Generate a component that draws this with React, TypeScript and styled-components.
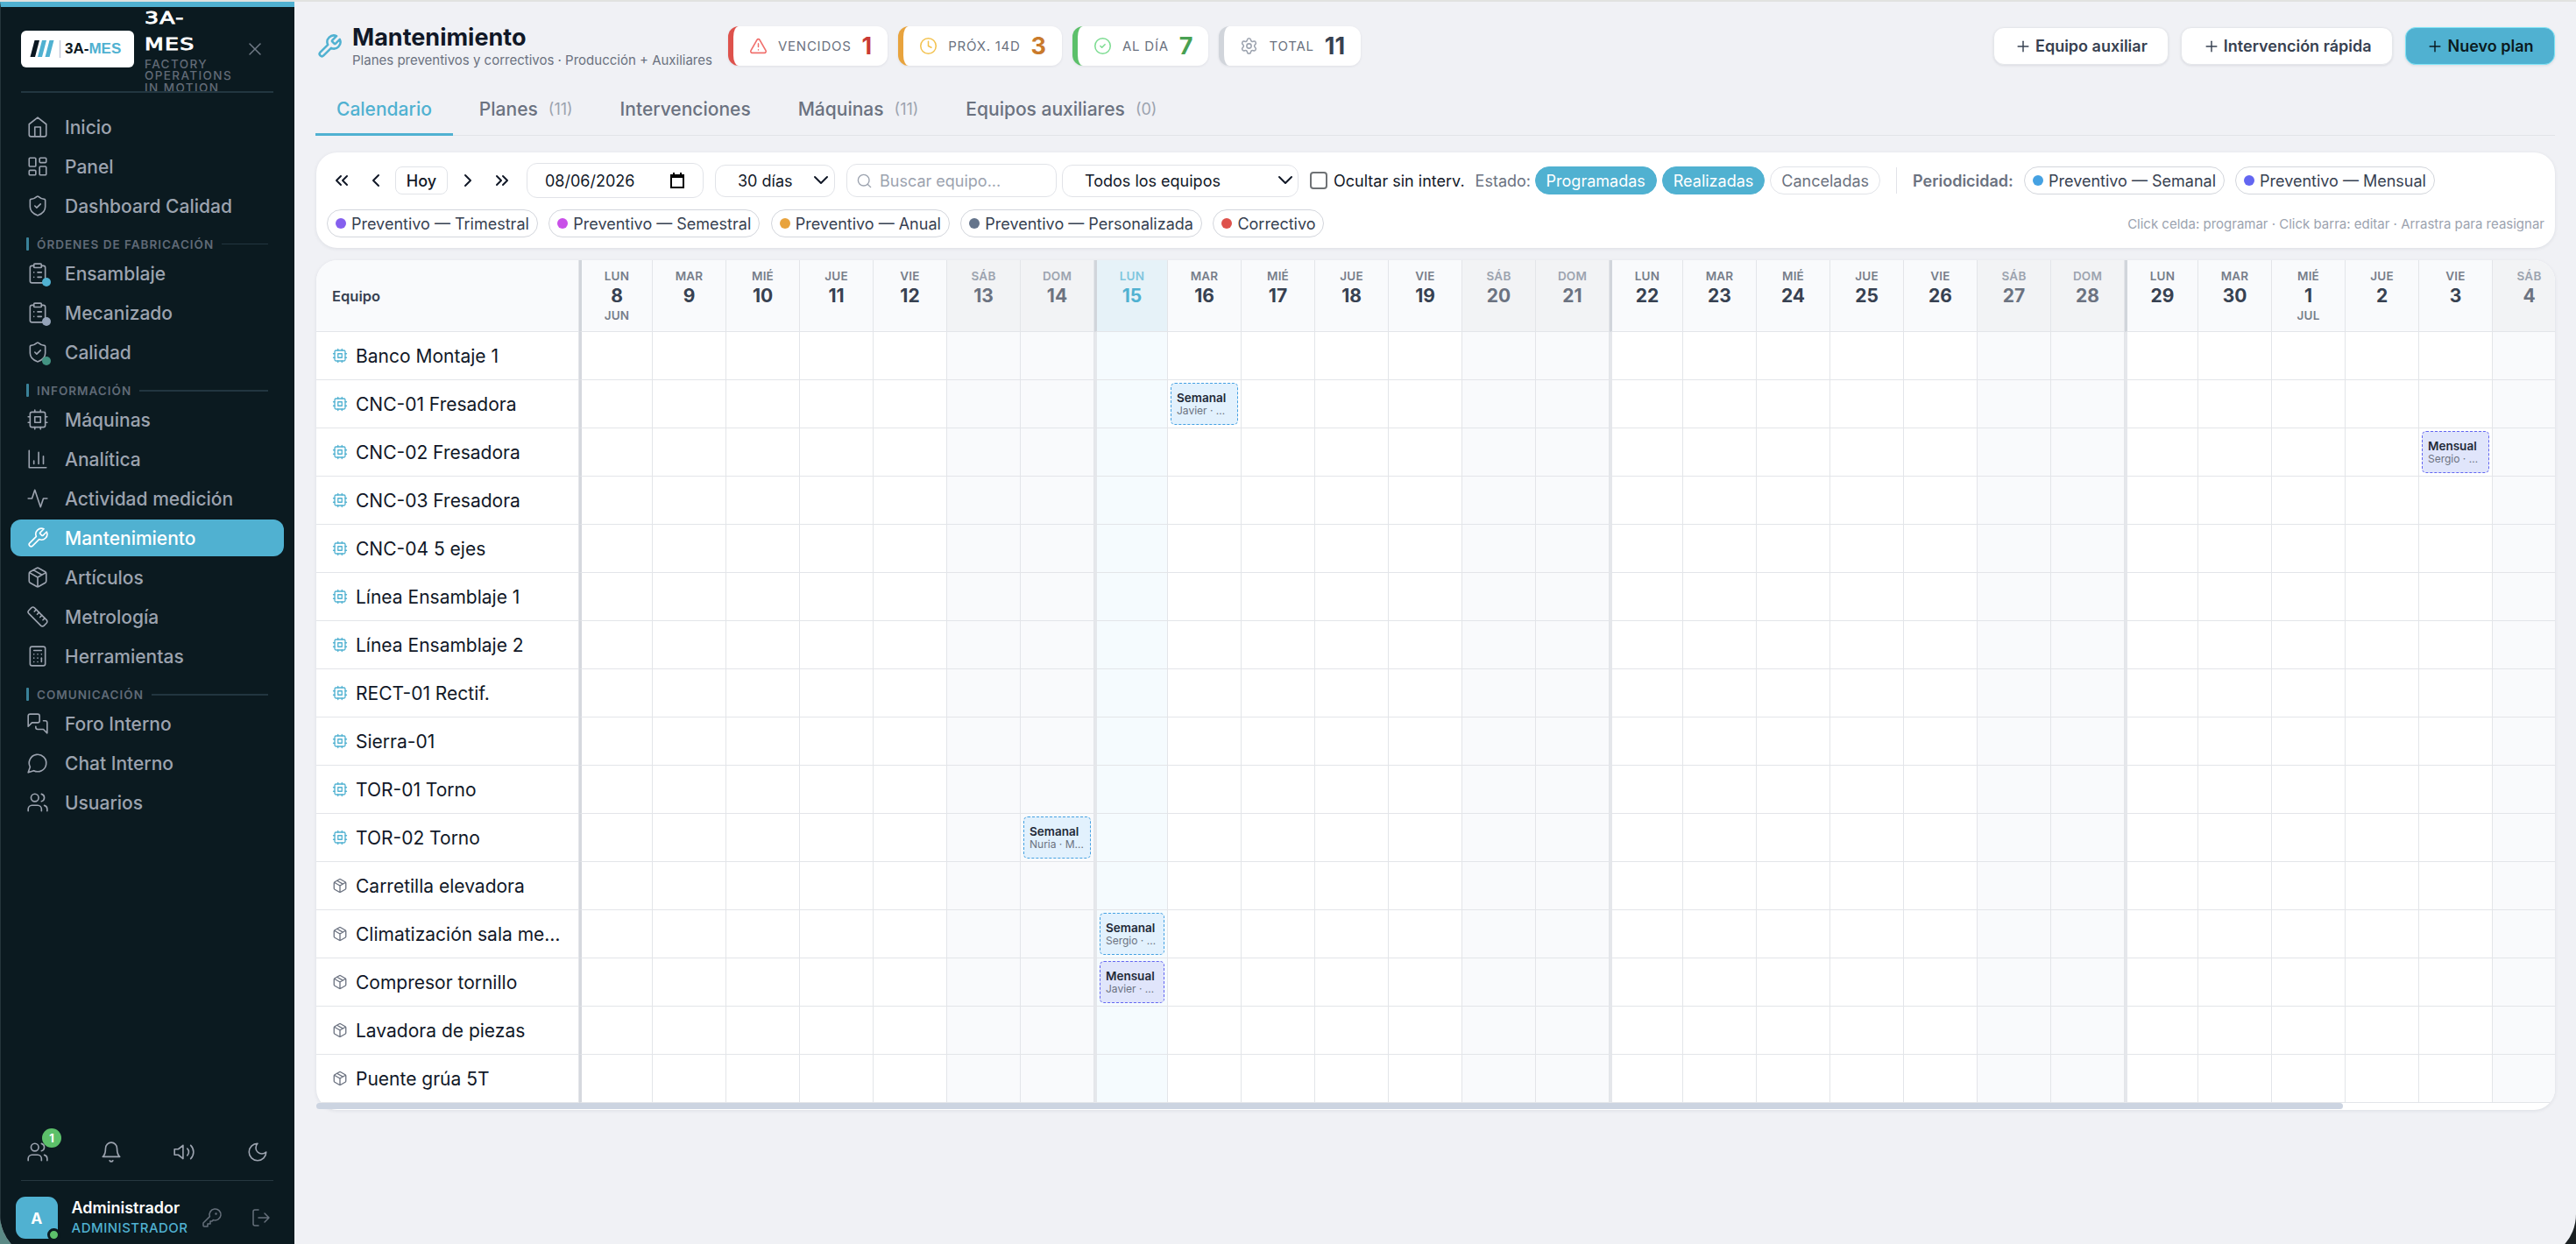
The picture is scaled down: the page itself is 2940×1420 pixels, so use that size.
import React from "react";
import styled, { createGlobalStyle, css } from "styled-components";
import {
  ShieldCheck, LayoutDashboard, ClipboardList, Ruler, Calculator, Users, TriangleAlert, Clock,
  CircleCheck, Settings, Plus, ChevronsLeft, ChevronLeft, ChevronRight, ChevronsRight, Search, X,
} from "lucide-react";

const teal = "#50b1d1";
const ink = "#0b1a20";
const line = "#e3e5e9";

const GlobalStyle = createGlobalStyle`
  *, *::before, *::after { box-sizing: border-box; }
  body { margin: 0; background: #0b1217; font-family: Inter, "Liberation Sans", sans-serif; }
  svg { display: block; flex: none; }
`;

/* ---------- icons ---------- */
type IconProps = { size?: number; strokeWidth?: number };
const stroked = (d: string, extra?: React.ReactNode) =>
  function Stroked({ size = 26, strokeWidth = 1.5 }: IconProps) {
    return (
      <svg width={size} height={size} viewBox="0 0 24 24" fill="none" stroke="currentColor"
        strokeWidth={strokeWidth} strokeLinecap="round" strokeLinejoin="round">
        <path d={d} />
        {extra}
      </svg>
    );
  };
const HomeIcon = stroked("m3 9 9-7 9 7v11a2 2 0 0 1-2 2H5a2 2 0 0 1-2-2z M9 22V12h6v10");
const Chip = stroked("M15 2v2M15 20v2M2 15h2M2 9h2M20 15h2M20 9h2M9 2v2M9 20v2",
  <><rect x="4" y="4" width="16" height="16" rx="2" /><rect x="9" y="9" width="6" height="6" /></>);
const Bars = stroked("M3 3v18h18M18 17V9M13 17V5M8 17v-3");
const Pulse = stroked("M22 12h-4l-3 9L9 3l-3 9H2");
const WrenchIcon = stroked("M14.7 6.3a1 1 0 0 0 0 1.4l1.6 1.6a1 1 0 0 0 1.4 0l3.77-3.77a6 6 0 0 1-7.94 7.94l-6.91 6.91a2.12 2.12 0 0 1-3-3l6.91-6.91a6 6 0 0 1 7.94-7.94l-3.76 3.76z");
const Box = stroked("m7.5 4.27 9 5.15M21 8a2 2 0 0 0-1-1.73l-7-4a2 2 0 0 0-2 0l-7 4A2 2 0 0 0 3 8v8a2 2 0 0 0 1 1.73l7 4a2 2 0 0 0 2 0l7-4A2 2 0 0 0 21 16ZM3.3 7l8.7 5 8.7-5M12 22V12");
const Forum = stroked("M14 9a2 2 0 0 1-2 2H6l-4 4V4c0-1.1.9-2 2-2h8a2 2 0 0 1 2 2zM18 9h2a2 2 0 0 1 2 2v11l-4-4h-6a2 2 0 0 1-2-2v-1");
const Chat = stroked("M7.9 20A9 9 0 1 0 4 16.1L2 22Z");
const BellIcon = stroked("M6 8a6 6 0 0 1 12 0c0 7 3 9 3 9H3s3-2 3-9M10.3 21a1.94 1.94 0 0 0 3.4 0");
const Volume = stroked("M11 5 6 9H2v6h4l5 4zM15.54 8.46a5 5 0 0 1 0 7.07M19.07 4.93a10 10 0 0 1 0 14.14");
const MoonIcon = stroked("M12 3a6 6 0 0 0 9 9 9 9 0 1 1-9-9Z");
const KeyIcon = stroked("M2 18v3c0 .6.4 1 1 1h4v-3h3v-3h2l1.4-1.4a6.5 6.5 0 1 0-4-4Z",
  <circle cx="16.5" cy="7.5" r=".5" fill="currentColor" />);
const Exit = stroked("M9 21H5a2 2 0 0 1-2-2V5a2 2 0 0 1 2-2h4M16 17l5-5-5-5M21 12H9");

/* ---------- frame ---------- */
const Desktop = styled.div`
  width: 2940px; height: 1420px; overflow: hidden;
  background: linear-gradient(90deg, #5b8a86 0 50%, #1a2022 50%);
`;
const Win = styled.div`
  height: 1438px; display: flex; overflow: hidden;
  border-top: 2px solid #e1e2e0; border-radius: 0 0 52px 52px; background: #f0f1f5;
`;

/* ---------- sidebar ---------- */
const Sidebar = styled.aside`
  width: 336px; flex: none; display: flex; flex-direction: column; color: #9ca3af; padding-bottom: 18px;
  background: ${ink}; border-top: 6px solid ${teal}; border-left: 1px solid #25353b;
`;
const Brand = styled.div`
  height: 98px; flex: none; margin: 0 24px 0 23px; display: flex; align-items: center; overflow: hidden;
  border-bottom: 2px solid #223640;
`;
const Logo = styled.div`
  width: 129px; height: 42px; border-radius: 6px; background: #fff; flex: none;
  display: flex; align-items: center; padding-left: 10px; gap: 4px;
  font: 700 17px "Liberation Sans", Arial, sans-serif; color: #0b1720;
  b { color: ${teal}; }
`;
const BrandText = styled.div`width: 114px; margin-left: 12px;`;
const BrandName = styled.div`
  width: 58px; font: 400 20px/30px "DejaVu Sans", sans-serif; letter-spacing: 1px; color: #fff;
  -webkit-text-stroke: .9px #fff; transform: scaleX(1.26); transform-origin: left;
`;
const BrandTag = styled.div`
  font-size: 13.5px; line-height: 13.3px; font-weight: 500; letter-spacing: 1.4px; color: #626b77; padding-top: 2px;
`;
const Close = styled.div`color: #717a86;`;
const Nav = styled.nav`display: flex; flex-direction: column; gap: 3px; padding: 18px 12px 0 11px; flex: 1;`;
const NavItem = styled.div<{ $active?: boolean }>`
  height: 42px; border-radius: 12px; padding-left: 18px; display: flex; align-items: center; gap: 18px;
  font-size: 21px; font-weight: 500; white-space: nowrap;
  ${(p) => p.$active && css`background: ${teal}; color: #fff;`}
`;
const IconWrap = styled.span`position: relative; display: block;`;
const Dot = styled.i<{ $c: string }>`
  position: absolute; right: -2px; bottom: -2px; width: 10px; height: 10px; border-radius: 50%; background: ${(p) => p.$c};
`;
const Section = styled.div<{ $rule: number }>`
  height: 29px; padding: 10px 18px 0 18px; display: flex; align-items: center; gap: 9px;
  font-size: 13.5px; font-weight: 600; letter-spacing: 1px; color: #606a77; white-space: nowrap;
  &::before { content: ""; width: 3px; height: 15px; background: #3a8299; border-radius: 1px; }
  &::after { content: ""; flex: 1; height: ${(p) => p.$rule}px; background: #223640; }
`;
const Tray = styled.div`
  height: 64px; flex: none; margin: 0 24px 0 23px; padding: 0 5px 2px 6px; border-bottom: 1px solid #263840;
  display: flex; align-items: center; justify-content: space-between;
`;
const Count = styled.span`
  position: absolute; left: 18px; top: -14px; width: 22px; height: 22px; border-radius: 50%; background: #5cc06a;
  color: #fff; font-size: 13px; font-weight: 700; line-height: 22px; text-align: center;
`;
const Profile = styled.div`height: 72px; flex: none; padding: 12px 26px 0 17px; display: flex; align-items: center;`;
const Avatar = styled.div`
  position: relative; width: 48px; height: 48px; border-radius: 11px; background: ${teal}; color: #fff;
  display: flex; align-items: center; justify-content: center; font-size: 17.5px; font-weight: 700;
  &::after { content: ""; position: absolute; right: -3px; bottom: -3px; width: 15px; height: 15px; border-radius: 50%;
    background: #5cc06a; border: 3px solid ${ink}; }
`;
const Who = styled.div`
  width: 150px; margin-left: 16px; font-size: 18px; line-height: 23px; font-weight: 600; color: #fff;
  small { display: block; font-size: 15px; font-weight: 500; letter-spacing: .5px; color: ${teal}; }
`;
const ProfileActions = styled.div`display: flex; gap: 32px; color: #66707b;`;

/* ---------- main ---------- */
const Main = styled.main`flex: 1; min-width: 0; padding: 28px 24px 0; display: flex; flex-direction: column;`;
const Header = styled.header`height: 45px; display: flex; align-items: center; color: ${teal}; padding-left: 1px;`;
const Heading = styled.div`width: 429px; margin-left: 11px; white-space: nowrap;`;
const Title = styled.h1`margin: 0; font-size: 27px; line-height: 32px; font-weight: 700; color: #111827;`;
const Subtitle = styled.div`font-size: 15px; line-height: 19px; color: #6b7280;`;
const Kpis = styled.div`display: flex; gap: 12px;`;
const Kpi = styled.div<{ $edge: string; $icon: string; $num: string }>`
  height: 45px; padding: 0 18px; border-left: 6px solid ${(p) => p.$edge}; border-radius: 12px; background: #fff;
  box-shadow: 0 1px 3px rgba(20, 30, 50, .08); display: flex; align-items: center; gap: 12px;
  font-size: 15px; letter-spacing: .75px; color: #6b7280; white-space: nowrap;
  svg { color: ${(p) => p.$icon}; }
  b { font-size: 27px; letter-spacing: 0; font-weight: 700; color: ${(p) => p.$num}; }
`;
const Actions = styled.div`display: flex; gap: 14px; margin-left: auto;`;
const Button = styled.button<{ $primary?: boolean }>`
  height: 43px; padding: 0 23.5px; border-radius: 12px; border: 1px solid ${(p) => (p.$primary ? "#7de4f6" : "#e5e7eb")};
  background: ${(p) => (p.$primary ? teal : "#fff")}; color: ${(p) => (p.$primary ? "#0b1a20" : "#374151")};
  font: 600 18px Inter, sans-serif; display: flex; align-items: center; gap: 4px; white-space: nowrap;
  box-shadow: 0 1px 3px rgba(20, 30, 50, .1);
`;
const Tabs = styled.div`
  margin-top: 21px; height: 59px; display: flex; gap: 6px; border-bottom: 1px solid #e2e4e8;
`;
const Tab = styled.div<{ $on?: boolean }>`
  height: 59px; padding: 0 24px; display: flex; align-items: center; gap: 12px; white-space: nowrap;
  font-size: 21px; font-weight: 500; color: ${(p) => (p.$on ? teal : "#6b7280")};
  border-bottom: 3px solid ${(p) => (p.$on ? teal : "transparent")};
  small { font-size: 18px; font-weight: 400; color: #9ca3af; }
`;
const card = css`border-radius: 24px; background: #fff; box-shadow: 0 1px 4px rgba(20, 30, 50, .09);`;
const Filters = styled.section`
  ${card} margin: 19px 0 0 1px; height: 109px; padding: 12px 12px 0; display: flex; flex-direction: column; gap: 13px;
`;
const Row = styled.div`display: flex; align-items: center; height: 40px; & + & { height: 32px; gap: 12.5px; }`;
const Pager = styled.div`display: flex; align-items: center; gap: 3px; margin: 0 9px 0 -3px;`;
const Steps = styled.div`
  display: flex; color: #111827;
  svg { margin: 0 7.5px; }
`;
const field = css`border: 1px solid #e1e3e8; background: #fff; color: #111827; white-space: nowrap; display: flex; align-items: center;`;
const Today = styled.div`${field} width: 60px; height: 32px; border-radius: 8px; justify-content: center; font-size: 18px; font-weight: 500;`;
const Field = styled.div<{ $w: number; $h: number; $pl: number; $pr: number; $ml: number }>`
  ${field} width: ${(p) => p.$w}px; height: ${(p) => p.$h}px; padding: 0 ${(p) => p.$pr}px 0 ${(p) => p.$pl}px;
  margin-left: ${(p) => p.$ml}px; border-radius: 12px; font-size: 18px; justify-content: space-between; flex: none;
`;
const Placeholder = styled.span`flex: 1; margin-left: 8px; color: #9ca3af;`;
const Check = styled.label`
  display: flex; align-items: center; gap: 7px; margin: 0 12px 0 13px; font-size: 18px; color: #111827; white-space: nowrap;
  &::before { content: ""; width: 20px; height: 20px; border: 2px solid #6f7275; border-radius: 4px; background: #fff; }
`;
const Label = styled.span<{ $strong?: boolean; $w: number }>`
  width: ${(p) => p.$w}px; font-size: 18px; font-weight: ${(p) => (p.$strong ? 600 : 400)}; color: #6b7280; white-space: nowrap;
`;
const State = styled.span<{ $on?: boolean }>`
  height: 32px; padding: 0 12px; margin-right: 6px; border-radius: 16px; display: flex; align-items: center; font-size: 18px;
  background: ${(p) => (p.$on ? teal : "#fff")}; color: ${(p) => (p.$on ? "#fff" : "#6b7280")};
  border: 1px solid ${(p) => (p.$on ? teal : "#e1e3e8")};
`;
const Separator = styled.i`width: 1px; height: 30px; background: #e1e3e8; margin: 0 18px 0 12px;`;
const Pill = styled.span<{ $c: string }>`
  height: 32px; padding: 0 9px 0 9px; border: 1px solid #d3d6dc; border-radius: 16px; display: flex; align-items: center; gap: 6px;
  font-size: 18px; color: #374151; white-space: nowrap;
  &::before { content: ""; width: 12px; height: 12px; border-radius: 50%; background: ${(p) => p.$c}; }
`;
const PillGap = styled.div`display: flex; gap: 12px;`;
const Hint = styled.span`margin-left: auto; font-size: 15px; color: #9ca3af; white-space: nowrap;`;

/* ---------- calendar ---------- */
const Calendar = styled.section`${card} margin: 14px 0 0 1px; height: 970px;`;
const Grid = styled.div`height: 962px; overflow: hidden; clip-path: inset(0 0 -8px 0 round 24px);`;
const Line = styled.div`display: flex; width: max-content;`;
const NameHead = styled.div`
  width: 300px; height: 82px; padding-left: 18px; background: #f9fafc; border-right: 1px solid ${line}; border-bottom: 1px solid ${line};
  display: flex; align-items: center; font-size: 16.5px; font-weight: 600; color: #374151;
`;
const DayHead = styled.div<{ $kind: string; $mon: boolean }>`
  width: 84px; height: 82px; padding-top: 9px; text-align: center; font-size: 13.5px; line-height: 18px; font-weight: 600; color: #777e8a;
  letter-spacing: .2px; border-right: 1px solid ${line}; border-bottom: 1px solid ${line}; background: #f9fafc;
  ${(p) => p.$mon && css`border-left: 3px solid #d1d5db;`}
  b { display: block; font-size: 21px; line-height: 27px; font-weight: 700; letter-spacing: 0; color: #374151; }
  ${(p) => p.$kind === "weekend" && css`background: #f2f3f5; color: #9ca3af; b { color: #6b7280; }`}
  ${(p) => p.$kind === "today" && css`background: #e6f2f8; color: #80c6de; b { color: ${teal}; }`}
`;
const NameCell = styled.div<{ $aux: boolean }>`
  width: 300px; height: 55px; padding: 0 18px; border-right: 1px solid ${line}; border-bottom: 1px solid ${line};
  display: flex; align-items: center; gap: 9px; color: ${(p) => (p.$aux ? "#6b7280" : teal)};
  span { font-size: 21px; color: #111827; overflow: hidden; text-overflow: ellipsis; white-space: nowrap; }
`;
const Cell = styled.div<{ $kind: string; $mon: boolean; $first: boolean }>`
  width: 84px; height: 55px; padding: 3px; border-right: 1px solid ${line}; border-bottom: 1px solid ${line};
  background: ${(p) => (p.$kind === "weekend" ? "#f9fafc" : p.$kind === "today" ? "#f5fbfe" : "#fff")};
  ${(p) => p.$mon && css`border-left: 3px solid ${p.$first ? "#d5d8de" : "#e5e7eb"};`}
`;
const Task = styled.div<{ $monthly: boolean }>`
  height: 48px; padding: 9px 6px 0; border-radius: 5px; border: 1px dashed ${(p) => (p.$monthly ? "#6366f1" : "#45a1e2")};
  background: ${(p) => (p.$monthly ? "#e0e5fb" : "#e2f1fd")};
  font-size: 12px; line-height: 14px; color: #6b7280;
  b { display: block; font-size: 13.5px; line-height: 15px; font-weight: 600; color: #1f2937; }
  span { display: block; overflow: hidden; text-overflow: ellipsis; white-space: nowrap; }
`;
const Thumb = styled.div`width: 2313px; height: 7px; border-radius: 4px; background: #ccd4e1;`;

const I = { size: 26, strokeWidth: 1.5 };
const nav: { title?: string; items: [string, React.ReactNode, string?][] }[] = [
  { items: [["Inicio", <HomeIcon />], ["Panel", <LayoutDashboard {...I} />], ["Dashboard Calidad", <ShieldCheck {...I} />]] },
  { title: "ÓRDENES DE FABRICACIÓN", items: [
    ["Ensamblaje", <ClipboardList {...I} />, teal], ["Mecanizado", <ClipboardList {...I} />, "#94a3b8"], ["Calidad", <ShieldCheck {...I} />, "#439382"]] },
  { title: "INFORMACIÓN", items: [
    ["Máquinas", <Chip />], ["Analítica", <Bars />], ["Actividad medición", <Pulse />], ["Mantenimiento", <WrenchIcon />],
    ["Artículos", <Box />], ["Metrología", <Ruler {...I} />], ["Herramientas", <Calculator {...I} />]] },
  { title: "COMUNICACIÓN", items: [["Foro Interno", <Forum />], ["Chat Interno", <Chat />], ["Usuarios", <Users {...I} />]] },
];

const names = ["LUN", "MAR", "MIÉ", "JUE", "VIE", "SÁB", "DOM"];
const days = Array.from({ length: 27 }, (_, i) => {
  const n = 8 + i;
  const w = i % 7;
  return {
    name: names[w], num: n > 30 ? n - 30 : n, month: i === 0 ? "JUN" : n === 31 ? "JUL" : "",
    mon: w === 0, kind: w > 4 ? "weekend" : n === 15 ? "today" : "",
  };
});
const machines = ["Banco Montaje 1", "CNC-01 Fresadora", "CNC-02 Fresadora", "CNC-03 Fresadora", "CNC-04 5 ejes", "Línea Ensamblaje 1",
  "Línea Ensamblaje 2", "RECT-01 Rectif.", "Sierra-01", "TOR-01 Torno", "TOR-02 Torno", "Carretilla elevadora",
  "Climatización sala metrología", "Compresor tornillo", "Lavadora de piezas", "Puente grúa 5T"];
const tasks: Record<string, [string, string]> = {
  "1-8": ["Semanal", "Javier · Martín"], "2-25": ["Mensual", "Sergio · López"], "10-6": ["Semanal", "Nuria · Molina"],
  "12-7": ["Semanal", "Sergio · López"], "13-7": ["Mensual", "Javier · Martín"],
};

const Caret = () => (
  <svg width="18" height="12" viewBox="0 0 18 12" fill="none" stroke="#111827" strokeWidth="2" strokeLinecap="round" strokeLinejoin="round">
    <path d="M2 2l7 7 7-7" />
  </svg>
);

export default function App() {
  return (
    <Desktop>
      <GlobalStyle />
      <Win>
        <Sidebar>
          <Brand>
            <Logo>
              <svg width="36" height="22" viewBox="0 0 36 22">
                <path d="M5.5 1h5.5L6 20H.5z" fill="#0b1720" />
                <path d="M14 1h5l-5 19H9zM22.5 1h5l-5 19h-5z" fill={teal} />
                <path d="M34.5 1v20" stroke="#c5cbdb" strokeWidth="1.5" />
              </svg>
              <span>3A-<b>MES</b></span>
            </Logo>
            <BrandText>
              <BrandName>3A- MES</BrandName>
              <BrandTag>FACTORY OPERATIONS IN MOTION</BrandTag>
            </BrandText>
            <Close><X size={24} strokeWidth={1.5} /></Close>
          </Brand>
          <Nav>
            {nav.map((group, g) => (
              <React.Fragment key={g}>
                {group.title && <Section $rule={g === 1 ? 1 : 2}>{group.title}</Section>}
                {group.items.map(([label, icon, dot]) => (
                  <NavItem key={label} $active={label === "Mantenimiento"}>
                    <IconWrap>{icon}{dot && <Dot $c={dot} />}</IconWrap>
                    {label}
                  </NavItem>
                ))}
              </React.Fragment>
            ))}
          </Nav>
          <Tray>
            <IconWrap><Users {...I} /><Count>1</Count></IconWrap>
            <BellIcon /><Volume /><MoonIcon />
          </Tray>
          <Profile>
            <Avatar>A</Avatar>
            <Who>Administrador<small>ADMINISTRADOR</small></Who>
            <ProfileActions><KeyIcon size={24} /><Exit size={24} /></ProfileActions>
          </Profile>
        </Sidebar>

        <Main>
          <Header>
            <WrenchIcon size={30} strokeWidth={2} />
            <Heading>
              <Title>Mantenimiento</Title>
              <Subtitle>Planes preventivos y correctivos · Producción + Auxiliares</Subtitle>
            </Heading>
            <Kpis>
              <Kpi $edge="#de524c" $icon="#f0716e" $num="#c93a35"><TriangleAlert size={21} strokeWidth={1.75} />VENCIDOS<b>1</b></Kpi>
              <Kpi $edge="#e8a33d" $icon="#f3c24f" $num="#c97a2b"><Clock size={21} strokeWidth={1.75} />PRÓX. 14D<b>3</b></Kpi>
              <Kpi $edge="#5cc06a" $icon="#7cdc91" $num="#48a052"><CircleCheck size={21} strokeWidth={1.75} />AL DÍA<b>7</b></Kpi>
              <Kpi $edge="#d1d5db" $icon="#9ca3af" $num="#374151"><Settings size={21} strokeWidth={1.75} />TOTAL<b>11</b></Kpi>
            </Kpis>
            <Actions>
              <Button><Plus size={20} strokeWidth={1.75} />Equipo auxiliar</Button>
              <Button><Plus size={20} strokeWidth={1.75} />Intervención rápida</Button>
              <Button $primary><Plus size={20} strokeWidth={1.75} />Nuevo plan</Button>
            </Actions>
          </Header>
          <Tabs>
            <Tab $on>Calendario</Tab>
            <Tab>Planes<small>(11)</small></Tab>
            <Tab>Intervenciones</Tab>
            <Tab>Máquinas<small>(11)</small></Tab>
            <Tab>Equipos auxiliares<small>(0)</small></Tab>
          </Tabs>

          <Filters>
            <Row>
              <Pager>
                <Steps><ChevronsLeft size={24} /><ChevronLeft size={24} /></Steps>
                <Today>Hoy</Today>
                <Steps><ChevronRight size={24} /><ChevronsRight size={24} /></Steps>
              </Pager>
              <Field $w={202} $h={40} $pl={20} $pr={21} $ml={0}>
                <span>08/06/2026</span>
                <svg width="16" height="18" viewBox="0 0 16 18"><path d="M1 3h14v14H1z" fill="none" stroke="#000" strokeWidth="2" /><path d="M0 2h16v4H0zM3 0h2v3H3zM11 0h2v3h-2z" /></svg>
              </Field>
              <Field $w={137} $h={37} $pl={25} $pr={6} $ml={13}><span>30 días</span><Caret /></Field>
              <Field $w={240} $h={38} $pl={10} $pr={10} $ml={13}><Search size={19} color="#9ca3af" strokeWidth={1.75} /><Placeholder>Buscar equipo...</Placeholder></Field>
              <Field $w={270} $h={37} $pl={25} $pr={5} $ml={6}><span>Todos los equipos</span><Caret /></Field>
              <Check>Ocultar sin interv.</Check>
              <Label $w={68}>Estado:</Label>
              <State $on>Programadas</State>
              <State $on>Realizadas</State>
              <State>Canceladas</State>
              <Separator />
              <Label $strong $w={127}>Periodicidad:</Label>
              <PillGap>
                <Pill $c="#45a1e2">Preventivo — Semanal</Pill>
                <Pill $c="#6366f1">Preventivo — Mensual</Pill>
              </PillGap>
            </Row>
            <Row>
              <Pill $c="#8560ee">Preventivo — Trimestral</Pill>
              <Pill $c="#c94fe8">Preventivo — Semestral</Pill>
              <Pill $c="#e8a33d">Preventivo — Anual</Pill>
              <Pill $c="#64748b">Preventivo — Personalizada</Pill>
              <Pill $c="#de524c">Correctivo</Pill>
              <Hint>Click celda: programar · Click barra: editar · Arrastra para reasignar</Hint>
            </Row>
          </Filters>

          <Calendar>
            <Grid>
              <Line>
                <NameHead>Equipo</NameHead>
                {days.map((d, i) => (
                  <DayHead key={i} $kind={d.kind} $mon={d.mon}>{d.name}<b>{d.num}</b>{d.month}</DayHead>
                ))}
              </Line>
              {machines.map((m, r) => (
                <Line key={m}>
                  <NameCell $aux={r > 10}>
                    {r > 10 ? <Box size={18} strokeWidth={1.75} /> : <Chip size={18} strokeWidth={1.75} />}
                    <span>{m}</span>
                  </NameCell>
                  {days.map((d, i) => {
                    const t = tasks[`${r}-${i}`];
                    return (
                      <Cell key={i} $kind={d.kind} $mon={d.mon} $first={i === 0}>
                        {t && <Task $monthly={t[0] === "Mensual"}><b>{t[0]}</b><span>{t[1]}</span></Task>}
                      </Cell>
                    );
                  })}
                </Line>
              ))}
            </Grid>
            <Thumb />
          </Calendar>
        </Main>
      </Win>
    </Desktop>
  );
}
